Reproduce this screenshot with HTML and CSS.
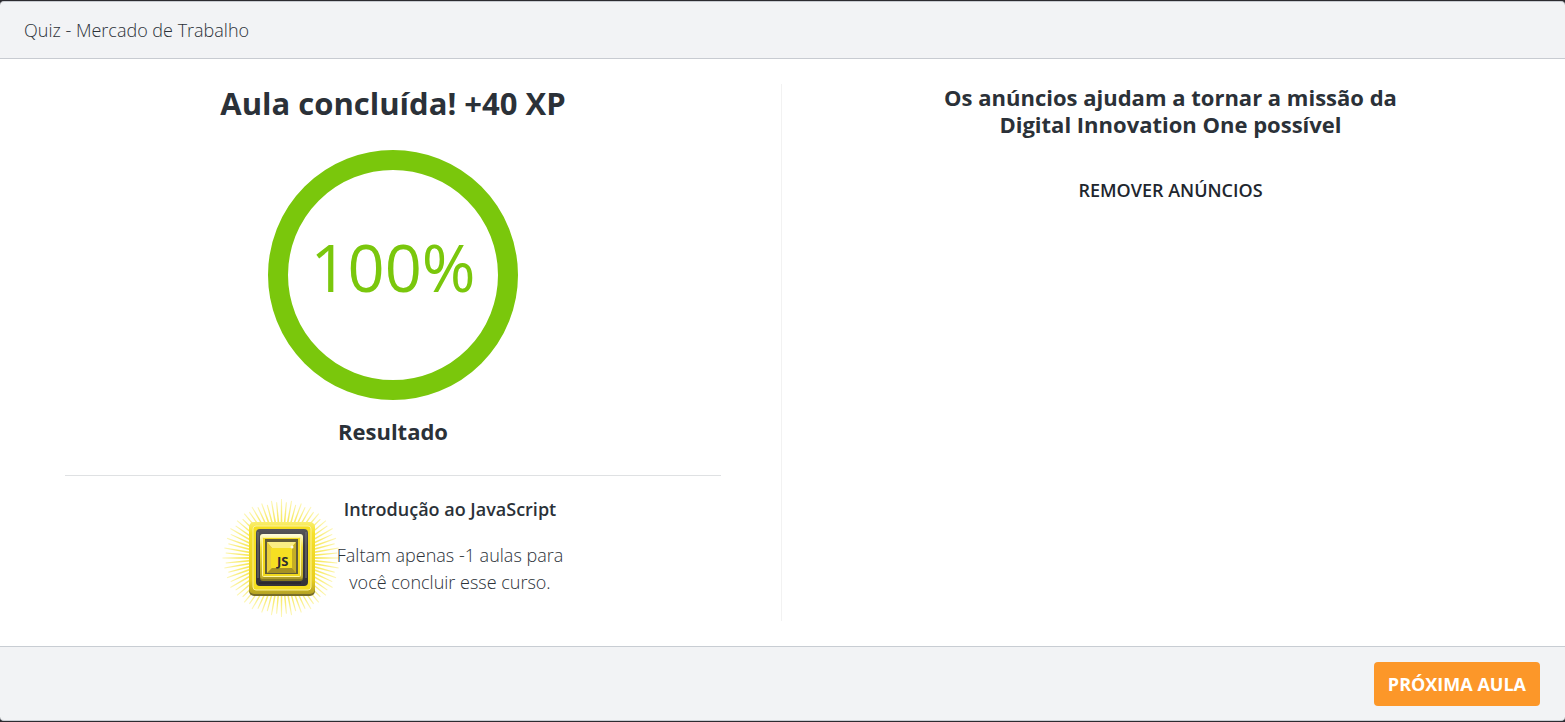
FILE: index.html
```html
<!DOCTYPE html>
<html lang="pt-BR">
<head>
<meta charset="utf-8">
<meta name="viewport" content="width=device-width, initial-scale=1">
<title>Quiz - Mercado de Trabalho</title>
<link rel="stylesheet" href="styles.css">
</head>
<body>
<div class="modal">
  <header class="modal-header">Quiz - Mercado de Trabalho</header>
  <main class="modal-body">
    <section class="result">
      <h1 class="result-title">Aula concluída! +40 XP</h1>
      <div class="score"><span class="score-value">100%</span></div>
      <h2 class="subtitle">Resultado</h2>
      <hr class="separator">
      <div class="course">
        <svg class="badge" viewBox="-3 -3 118 120" aria-hidden="true">
          <defs>
            <radialGradient id="glow" gradientUnits="userSpaceOnUse" cx="56.500" cy="57" r="60">
              <stop offset=".5" stop-color="#f7e74f"/><stop offset=".75" stop-color="#f9ed7a"/><stop offset="1" stop-color="#fdf8c0"/>
            </radialGradient>
            <g id="rays" fill="url(#glow)">
              <path d="M55.600 26 56-2h1L57.400 26z"/>
              <path d="M55.600 26 56 1h1L57.400 26z" transform="rotate(5 56.500 57)"/>
              <path d="M55.600 26 56-1h1L57.400 26z" transform="rotate(10 56.500 57)"/>
              <path d="M55.600 26 56 2h1L57.400 26z" transform="rotate(15 56.500 57)"/>
              <path d="M55.600 26 56-1h1L57.400 26z" transform="rotate(20 56.500 57)"/>
              <path d="M55.600 26 56 1h1L57.400 26z" transform="rotate(25 56.500 57)"/>
            </g>
            <linearGradient id="base" x2="0" y2="1">
              <stop offset="0" stop-color="#f9ee6e"/><stop offset=".15" stop-color="#f6e12b"/>
              <stop offset=".8" stop-color="#e9cf1e"/><stop offset="1" stop-color="#b5a325"/>
            </linearGradient>
            <linearGradient id="well" x2="0" y2="1">
              <stop offset="0" stop-color="#57565a"/><stop offset=".3" stop-color="#3d3c40"/><stop offset="1" stop-color="#343338"/>
            </linearGradient>
            <linearGradient id="frame" x2="0" y2="1">
              <stop offset="0" stop-color="#fffde0"/><stop offset=".3" stop-color="#f6e23a"/><stop offset="1" stop-color="#b8a52b"/>
            </linearGradient>
          </defs>
          <use href="#rays"/>
          <use href="#rays" transform="rotate(30 56.500 57)"/>
          <use href="#rays" transform="rotate(60 56.500 57)"/>
          <use href="#rays" transform="rotate(90 56.500 57)"/>
          <use href="#rays" transform="rotate(120 56.500 57)"/>
          <use href="#rays" transform="rotate(150 56.500 57)"/>
          <use href="#rays" transform="rotate(180 56.500 57)"/>
          <use href="#rays" transform="rotate(210 56.500 57)"/>
          <use href="#rays" transform="rotate(240 56.500 57)"/>
          <use href="#rays" transform="rotate(270 56.500 57)"/>
          <use href="#rays" transform="rotate(300 56.500 57)"/>
          <use href="#rays" transform="rotate(330 56.500 57)"/>
          <rect x="24" y="24" width="66" height="71" rx="5" fill="#786d29"/>
          <rect x="24" y="21" width="66" height="72" rx="5" fill="url(#base)"/>
          <rect x="28" y="25" width="58" height="64" rx="3" fill="#f5df20" stroke="#fbf29a"/>
          <rect x="31" y="28" width="52" height="57" rx="4" fill="url(#well)"/>
          <path d="M33 31v46M81 31v46" stroke="#77767a"/>
          <path d="M34 82h42" stroke="#222126"/>
          <rect x="35" y="33" width="43" height="47" rx="3" fill="#857922"/>
          <rect x="35" y="33" width="43" height="45" rx="3" fill="url(#frame)"/>
          <rect x="37.5" y="36.5" width="38" height="39" rx="1" fill="#f1d91d" stroke="#fff7a0"/>
          <path d="M38 77h38" stroke="#a39225"/>
          <path d="M40 38h33v35H40z" fill="#625c39"/>
          <path d="M42 41h29v31H42z" fill="#d8be25"/>
          <path d="M42 41h29l-5 6H47z" fill="#faee83"/>
          <path d="M42 41l5 6v20l-5 5z" fill="#e9d03b"/>
          <path d="M71 41l-4 6v20l4 5z" fill="#c5ae26"/>
          <path d="M42 72l5-5h20l4 5z" fill="#a69224"/>
          <path d="M46 47h21v20H46z" fill="#f6df22"/>
          <circle cx="67" cy="46" r="1.5" fill="#fffde9"/>
          <text class="badge-text" x="52" y="65">JS</text>
        </svg>
        <div class="course-info">
          <h3 class="course-name">Introdução ao JavaScript</h3>
          <p class="course-progress">Faltam apenas -1 aulas para você concluir esse curso.</p>
        </div>
      </div>
    </section>
    <aside class="ads">
      <h2 class="subtitle ads-title">Os anúncios ajudam a tornar a missão da Digital Innovation One possível</h2>
      <a class="remove-ads" href="#">REMOVER ANÚNCIOS</a>
    </aside>
  </main>
  <footer class="modal-footer">
    <button class="next" type="button">PRÓXIMA AULA</button>
  </footer>
</div>
</body>
</html>
```
FILE: styles.css
```css
* { box-sizing: border-box; }
body {
  margin: 0;
  background: #2c2b30;
  color: #2b3138;
  font: 300 18px/27px "Open Sans", "Noto Sans", sans-serif;
}
h1, h2, h3, p { margin: 0; }
.modal {
  display: flex;
  flex-direction: column;
  min-height: calc(100vh - 1px);
  border-top: 1px solid #2c2b30;
}
.modal-header {
  padding: 15px 24px 14px;
  border-top: 1px solid #c8cbd1;
  border-bottom: 1px solid #c8cbd1;
  border-radius: 4px 4px 0 0;
  background: #f2f3f5;
}
.modal-body {
  flex: 1;
  display: grid;
  grid-template-columns: 1fr 1fr;
  padding: 25px 6px 25px 5px;
  background: #fff;
}
.result {
  padding: 0 60px;
  border-right: 1px solid #f2f2f2;
  text-align: center;
}
.result-title { font-size: 31px; line-height: 38px; font-weight: 700; }
.score {
  display: flex;
  align-items: center;
  justify-content: center;
  width: 250px;
  height: 250px;
  margin: 28px auto 18px;
  padding-bottom: 16px;
  border: 20px solid #7ac70c;
  border-radius: 50%;
}
.score-value { color: #7ac70c; font-size: 65px; line-height: 80px; font-weight: 400; }
.subtitle { font-size: 22px; line-height: 27px; font-weight: 700; }
.separator { margin: 30px 0 20px; border: 0; border-top: 1px solid #dfe1e3; }
.course { display: flex; justify-content: center; }
.badge { flex: none; width: 118px; height: 120px; margin-top: 2px; }
.badge-text { fill: #2c2c30; font: 700 13px "Open Sans", sans-serif; }
.course-info { width: 228px; margin-left: -4px; }
.course-name { font-size: 18px; line-height: 27px; font-weight: 600; white-space: nowrap; }
.course-progress { margin-top: 19px; }
.ads { display: flex; flex-direction: column; align-items: center; text-align: center; }
.ads-title { max-width: 500px; }
.remove-ads { margin-top: 39px; color: #21262e; font-weight: 600; text-decoration: none; }
.modal-footer {
  display: flex;
  justify-content: flex-end;
  padding: 15px 25px 14px;
  border-top: 1px solid #c8cdd3;
  border-bottom: 1px solid #c8cdd3;
  border-radius: 0 0 4px 4px;
  background: #f2f3f5;
}
.next {
  height: 44px;
  padding: 0 14px;
  border: 0;
  border-radius: 4px;
  background: #fc9729;
  color: #fff;
  font: 700 18px/27px "Open Sans", "Noto Sans", sans-serif;
  cursor: pointer;
}
```
